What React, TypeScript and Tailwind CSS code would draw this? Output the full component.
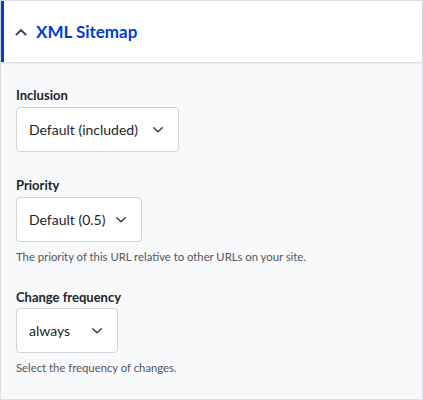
import React from "react";

const Chevron = () => (
  <svg width="12" height="8" viewBox="0 0 12 8" fill="none" className="shrink-0">
    <path d="M1.75 1.75 L6 5.75 L10.25 1.75" stroke="#3b3d45" strokeWidth="1.5" strokeLinecap="round" strokeLinejoin="round" />
  </svg>
);

function Select({ value, w }: { value: string; w: string }) {
  return (
    <div className={`flex h-[45px] items-center justify-between rounded-[4px] border border-[#d3d4d9] bg-white pl-[12px] pr-[14px] ${w}`}>
      <span className="whitespace-nowrap text-[14px] text-[#232429]">{value}</span>
      <Chevron />
    </div>
  );
}

export default function App() {
  return (
    <div className="h-[400px] w-[423px] overflow-hidden bg-white" style={{ fontFamily: '"Lato", "Noto Sans", sans-serif' }}>
      <div className="flex h-full flex-col border border-[#dedfe4]">
        <div className="relative z-10 flex h-[61px] items-center border-l-[3px] border-[#003ecc] bg-white pl-[11px] shadow-[0_1px_2px_rgba(0,0,0,0.15)]">
          <svg width="12" height="8" viewBox="0 0 12 8" fill="none" className="mr-[9px]">
            <path d="M1.5 6.5 L6 2 L10.5 6.5" stroke="#3b4a6b" strokeWidth="2" strokeLinecap="round" strokeLinejoin="round" />
          </svg>
          <span className="text-[17px] font-bold text-[#003ecc]">XML Sitemap</span>
        </div>
        <div className="flex flex-1 flex-col bg-[#f8f9fb] px-[15px] pt-[23px]">
          <div className="text-[13px] font-bold leading-[20px] text-[#232429]">Inclusion</div>
          <div className="mt-[2px]">
            <Select value="Default (included)" w="w-[163px]" />
          </div>
          <div className="mt-[23px] text-[13px] font-bold leading-[20px] text-[#232429]">Priority</div>
          <div className="mt-[2px]">
            <Select value="Default (0.5)" w="w-[126px]" />
          </div>
          <div className="mt-[6px] text-[11.3px] leading-[18px] text-[#545560]">The priority of this URL relative to other URLs on your site.</div>
          <div className="mt-[21px] text-[13px] font-bold leading-[20px] text-[#232429]">Change frequency</div>
          <div className="mt-[1px]">
            <Select value="always" w="w-[102px]" />
          </div>
          <div className="mt-[6px] text-[11.3px] leading-[18px] text-[#545560]">Select the frequency of changes.</div>
        </div>
      </div>
    </div>
  );
}
